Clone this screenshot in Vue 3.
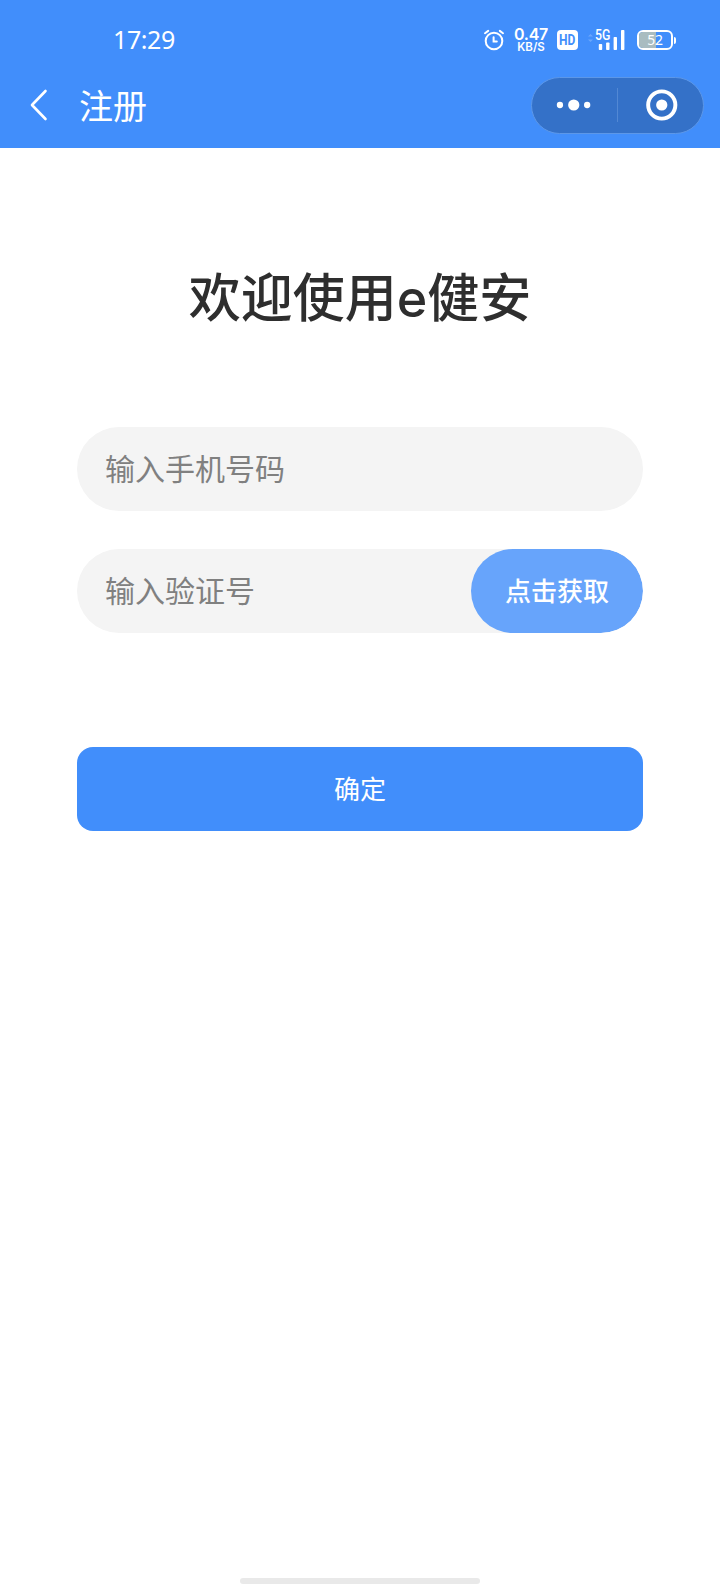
<!-- src/views/Register.vue -->
<template>
  <div class="page">
    <header class="header">
      <div class="status-bar">
        <span class="time">17:29</span>
        <div class="status-icons">
          <svg class="alarm" width="22" height="22" viewBox="0 0 22 22" fill="none" stroke="#fff" stroke-width="2" stroke-linecap="round">
            <circle cx="11" cy="12" r="8.3" />
            <path d="M10.6 8.2v4.4h3.2M2 4.2l3.2-2.3M20 4.2l-3.2-2.3" />
          </svg>
          <div class="speed">
            <span class="speed-num">0.47</span>
            <span class="speed-unit">KB/S</span>
          </div>
          <span class="hd"><b>HD</b></span>
          <div class="signal">
            <svg width="40" height="22" viewBox="0 0 40 22">
              <path d="M1 7.5l2.5-2.5 2.5 2.5zM1 10.5l2.5 2.5 2.5-2.5z" fill="#fff" opacity=".22" />
              <g fill="#fff">
                <rect x="11.8" y="15" width="3.4" height="6" rx=".8" />
                <rect x="19.1" y="13.5" width="3.4" height="7.5" rx=".8" />
                <rect x="26.6" y="8" width="3.4" height="13" rx=".8" />
                <rect x="34" y="1" width="3.4" height="20" rx=".8" />
              </g>
            </svg>
            <span class="net">5G</span>
          </div>
          <div class="battery">
            <div class="battery-body">
              <div class="battery-level" :style="{ width: battery + '%' }"></div>
              <span class="battery-text">{{ battery }}</span>
            </div>
            <div class="battery-tip"></div>
          </div>
        </div>
      </div>

      <div class="nav-bar">
        <svg class="back" width="18" height="32" viewBox="0 0 18 32" fill="none" stroke="#fff" stroke-width="2.6" stroke-linecap="round" stroke-linejoin="round">
          <path d="M15.5 2L2 16l13.5 14" />
        </svg>
        <span class="nav-title">注册</span>
        <div class="capsule">
          <svg width="36" height="12" viewBox="0 0 36 12" fill="#fff">
            <circle cx="4" cy="6" r="3.2" />
            <circle cx="18" cy="6" r="5.7" />
            <circle cx="31.6" cy="6" r="3.2" />
          </svg>
          <i class="capsule-line"></i>
          <svg width="32" height="32" viewBox="0 0 32 32">
            <circle cx="16" cy="16" r="13.8" fill="none" stroke="#fff" stroke-width="4" />
            <circle cx="16" cy="16" r="5.7" fill="#fff" />
          </svg>
        </div>
      </div>
    </header>

    <main class="content">
      <h1 class="title">欢迎使用e健安</h1>
      <div class="field">
        <input v-model="phone" type="tel" placeholder="输入手机号码">
      </div>
      <div class="field">
        <input v-model="code" type="text" placeholder="输入验证号">
        <button class="get-code">点击获取</button>
      </div>
      <button class="submit">确定</button>
    </main>

    <div class="home-bar"></div>
  </div>
</template>

<script setup>
import { ref } from 'vue'

const battery = 52
const phone = ref('')
const code = ref('')
</script>

<style>
body { margin: 0; background: #fff; }
</style>

<style scoped>
.page {
  width: 720px; height: 1584px; box-sizing: border-box; overflow: hidden;
  display: flex; flex-direction: column;
  background: #fff; font-family: "Noto Sans CJK SC", sans-serif;
}
button, input { font-family: inherit; border: none; padding: 0; outline: none; }

.header { height: 148px; flex-shrink: 0; background: #418efb; color: #fff; }
.status-bar {
  height: 76px; box-sizing: border-box; padding: 4px 44px 0 113px;
  display: flex; align-items: center; justify-content: space-between;
}
.time { font: 25px/30px "Noto Sans", sans-serif; letter-spacing: -0.4px; padding-bottom: 2px; }
.status-icons { display: flex; align-items: center; }
.alarm { margin-right: 9px; }
.speed {
  width: 34px; height: 26px; margin-right: 9px;
  display: flex; flex-direction: column; align-items: center; justify-content: space-between;
  font-family: Inter, sans-serif; font-weight: 600; white-space: nowrap;
}
.speed-num { font-size: 16px; line-height: 15px; letter-spacing: -0.3px; }
.speed-unit { font-size: 11.5px; line-height: 11px; }
.hd {
  width: 21px; height: 20px; margin-right: 9px; border-radius: 4px;
  display: flex; justify-content: center;
  background: #fff; color: #418efb;
}
.hd b { font: 700 15px/20px Roboto, sans-serif; transform: scaleX(0.8); }
.signal { position: relative; width: 40px; height: 22px; margin-right: 10px; }
.signal svg { display: block; }
.net {
  position: absolute; left: 8px; top: -1px;
  font: 500 15px/14px Roboto, sans-serif; transform: scaleX(0.82); transform-origin: left;
}
.battery { display: flex; align-items: center; }
.battery-body {
  position: relative; width: 36px; height: 20px; box-sizing: border-box; overflow: hidden;
  border: 2px solid #fff; border-radius: 6px;
}
.battery-level { height: 100%; background: #a9bcc0; }
.battery-text {
  position: absolute; inset: 0;
  font: 14px/16px "Noto Sans", sans-serif; letter-spacing: -0.3px; text-align: center;
}
.battery-tip { width: 2px; height: 7px; margin-left: 1px; border-radius: 0 2px 2px 0; background: #fff; }

.nav-bar { height: 58px; display: flex; align-items: center; padding: 0 16px 0 30px; }
.nav-title { flex: 1; margin-left: 31px; font-size: 34px; line-height: 50px; }
.capsule {
  width: 173px; height: 57px; box-sizing: border-box; padding: 0 25px 0 24px;
  display: flex; align-items: center;
  border: 1px solid #5c97e8; border-radius: 29px; background: #3471c8;
}
.capsule-line { width: 1px; height: 34px; margin: 0 28px 0 26px; background: #5288d4; }

.content { flex: 1; padding: 0 77px; }
.title {
  margin: 112px 0 88.5px; text-align: center; white-space: nowrap;
  font-family: Inter, "Noto Sans CJK SC", sans-serif;
  font-size: 52px; line-height: 78px; font-weight: 500; color: #2e2e2e;
}
.field {
  height: 84px; margin-bottom: 38px; border-radius: 42px; overflow: hidden;
  display: flex; background: #f4f4f4;
}
.field input {
  flex: 1; min-width: 0; padding: 0 0 3px 28px; background: transparent;
  font-size: 30px; color: #333;
}
.field input::placeholder { color: #808080; opacity: 1; }
.get-code {
  width: 172px; height: 84px; padding-bottom: 2px; border-radius: 42px;
  background: #67a4fb; color: #fff; font-size: 26px; font-weight: 500;
}
.submit {
  display: block; width: 100%; height: 84px; margin-top: 114px; padding-bottom: 2px; border-radius: 16px;
  background: #418efb; color: #fff; font-size: 26px;
}
.home-bar { width: 240px; height: 6px; margin: 0 auto; border-radius: 3px; background: #e9e9e9; }
</style>
